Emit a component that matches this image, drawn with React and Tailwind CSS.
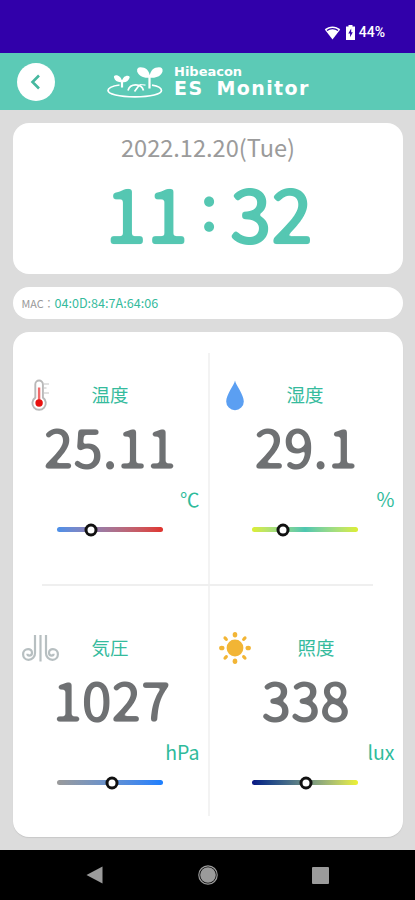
const sensors = [
  {
    id: 'temperature', label: '温度', value: '25.11', unit: '℃', Icon: Thermometer, knob: 32,
    track: 'bg-linear-to-r from-[#4a90ea] to-[#e0322c]', labelPad: 'pl-0', valuePad: 'pl-0',
  },
  {
    id: 'humidity', label: '湿度', value: '29.1', unit: '%', Icon: Drop, knob: 29,
    track: 'bg-linear-to-r from-[#dcee2c] via-[#4cc6b0] to-[#dcee2c]', labelPad: 'pl-0', valuePad: 'pl-[2px]',
  },
  {
    id: 'pressure', label: '気圧', value: '1027', unit: 'hPa', Icon: Wind, knob: 51.5,
    track: 'bg-linear-to-r from-[#9a9a9a] to-[#1b7fff]', labelPad: 'pl-0', valuePad: 'pl-[3px]',
  },
  {
    id: 'light', label: '照度', value: '338', unit: 'lux', Icon: Sun, knob: 51,
    track: 'bg-linear-to-r from-[#0c1484] to-[#eef22c]', labelPad: 'pl-[22px]', valuePad: 'pl-[1px]',
  },
];

function Thermometer() {
  return (
    <svg width="22" height="32" viewBox="0 0 22 32" fill="none">
      <path d="M6.300 18.600V5.300a3.800 3.800 0 0 1 7.600 0v13.300a6.700 6.700 0 1 1-7.600 0Z" fill="#fff" stroke="#b9b9b9" strokeWidth="1.900" />
      <path d="M10.100 8.500V23" stroke="#f06a6a" strokeWidth="2.400" />
      <circle cx="10.100" cy="24" r="3.700" fill="#e8110f" />
      <path d="M15 5H20M15 9h2.500M15 14H20" stroke="#c4c4c4" strokeWidth="1.200" />
    </svg>
  );
}

function Drop() {
  return (
    <svg width="18" height="31" viewBox="0 0 18 31">
      <path d="M9 .5C8.200 5.200 .2 14.500 .2 21.400A8.800 8.800 0 0 0 17.800 21.400C17.800 14.500 9.800 5.200 9 .5Z" fill="#5b9ff2" />
    </svg>
  );
}

function Wind() {
  return (
    <svg width="37" height="27" viewBox="0 0 37 27" fill="none" stroke="#b7bfc1" strokeWidth="2.200">
      <path d="M13 0V18a6.500 6.500 0 0 1-6.500 6.800C3 24.800 1.100 22.200 1.100 19.300c0-3 2.200-5.200 5-5.200 2.300 0 3.900 1.600 3.900 3.600 0 1.800-1.300 2.900-2.700 2.900-1.200 0-1.900-.8-1.900-1.800" />
      <path d="M18.500 0V26.500" />
      <path d="M24 0V18a6.500 6.500 0 0 0 6.500 6.800c3.500 0 5.400-2.600 5.400-5.500 0-3-2.200-5.200-5-5.200-2.300 0-3.900 1.600-3.900 3.600 0 1.800 1.300 2.900 2.700 2.900 1.200 0 1.900-.8 1.900-1.800" />
    </svg>
  );
}

function Sun() {
  return (
    <svg width="32" height="32" viewBox="-16 -16 32 32" fill="#f2b535">
      <circle r="8.400" />
      {[0, 45, 90, 135, 180, 225, 270, 315].map((a) => (
        <ellipse key={a} cx="0" cy="-13.200" rx={a % 90 ? 1.7 : 2.3} ry="2.700" transform={`rotate(${a})`} />
      ))}
    </svg>
  );
}

function Sprouts() {
  return (
    <svg width="56" height="33" viewBox="0 0 56 33" fill="none" stroke="#fff" strokeWidth="1.700">
      <path d="M12.500 18C5.500 19 1 21 1 23.500 1 27 12 29.800 28 29.800S54.500 27 54.500 23.500c0-2.700-4-4.500-9.500-5.400" />
      <path d="M38.500 18.200c-2.500-.5-4-.6-6-.7" strokeWidth="1.200" />
      <path d="M21 23.500a8 7.500 0 0 1 15.500 0M27.500 24.500l4.500-6" />
      <path d="M42.500 8V21.500M15 13V20.500" strokeWidth="2.200" />
      <g fill="#fff" stroke="none">
        <path d="M43 10.500C42.500 3 38.500 .3 33.500 .3 30.800 .3 29.700 2 30.200 4.200 31.300 9 37 11.500 43 10.500Z" />
        <path d="M42.500 10.500C43 3 47 .3 52 .3 55 .3 56 2 55.500 4.500 54 9.300 48.500 11.500 42.500 10.500Z" />
        <path d="M15.200 15C14.500 10.500 12 8.300 9 8.300 7.300 8.300 6.700 9.300 7 10.500 7.800 13.800 11 15.700 15.200 15Z" />
        <path d="M14.800 15C15.300 10.800 18 8.800 20.500 8.800 22.500 8.800 23 9.800 22.500 11 21.200 14.400 18.500 15.700 14.800 15Z" />
      </g>
    </svg>
  );
}

function Sensor({ label, value, unit, Icon, track, knob, labelPad, valuePad }) {
  return (
    <section className="flex h-[253px] flex-col">
      <div className="grid h-8 grid-cols-[55px_1fr_55px] items-center">
        <div className="flex justify-center"><Icon /></div>
        <h2 className={`h-8 text-center text-[18.500px] leading-[30px] text-[#35bb9d] ${labelPad}`}>{label}</h2>
      </div>
      <div className={`h-[74px] text-center text-[53px] leading-[68px] text-[#6f7173] [-webkit-text-stroke:1.200px_#6f7173] filter-[url(#soften)] ${valuePad}`}>
        {value}
      </div>
      <div className="h-[27px] pr-[8px] text-right text-[19.500px] leading-[28px] text-[#2fbb9b]">{unit}</div>
      <div className={`relative mx-auto mt-[15px] h-[5px] w-[106px] rounded-full ${track}`}>
        <span
          className="absolute top-1/2 size-[13px] -translate-x-1/2 -translate-y-1/2 rounded-full border-[3px] border-[#111] bg-white"
          style={{ left: `${knob}%` }}
        />
      </div>
    </section>
  );
}

export default function App() {
  return (
    <div className="flex h-[900px] w-[415px] flex-col overflow-hidden bg-[#dcdcdc] font-['Noto_Sans_CJK_JP',sans-serif]">
      <svg width="0" height="0" className="absolute">
        <filter id="soften" colorInterpolationFilters="sRGB">
          <feGaussianBlur stdDeviation="1.6" />
          <feComponentTransfer><feFuncA type="linear" slope="4" intercept="-1.4" /></feComponentTransfer>
        </filter>
      </svg>

      <div className="flex h-[52.500px] shrink-0 justify-end bg-[#3100aa] pt-[24px] pr-[30px] text-white">
        <div className="flex h-4 items-center">
          <svg width="17" height="15" viewBox="0 0 17 15">
            <path d="M8.500 14.500.8 4.600C5 .3 12 .3 16.200 4.600Z" fill="#fff" />
            <path d="M3 5.400C6 3 11 3 14 5.400" stroke="#3100aa" strokeWidth="1.300" fill="none" />
          </svg>
          <svg width="9" height="15" viewBox="0 0 9 15" className="ml-[5px]">
            <path d="M2.500 0h4v1.500H9V15H0V1.500h2.500Z" fill="#fff" />
            <path d="M5.200 3.500 2.300 8.400h1.800v3.800l2.700-5H5.200Z" fill="#3100aa" />
          </svg>
          <span className="ml-[4px] font-['Roboto',sans-serif] text-[14px] leading-4 font-medium">44%</span>
        </div>
      </div>

      <header className="flex h-[57.500px] shrink-0 items-start bg-[#5ccab6] text-white">
        <button className="mt-[10px] ml-[17px] flex size-[38px] items-center justify-center rounded-full bg-white">
          <svg width="12" height="16" viewBox="0 0 12 16" fill="none" stroke="#46b89f" strokeWidth="2.600">
            <path d="M9 1.500 2.500 8l6.500 6.500" />
          </svg>
        </button>
        <div className="mt-[14px] ml-[52px]"><Sprouts /></div>
        <h1 className="mt-[11px] ml-[11px] flex flex-col font-['DejaVu_Sans',sans-serif] font-bold">
          <span className="text-[13px] leading-[15px]">Hibeacon</span>
          <span className="text-[19px] leading-[19px] tracking-[1.400px] [word-spacing:5px]">ES Monitor</span>
        </h1>
      </header>

      <main className="flex flex-col px-[12.500px] pt-[13px]">
        <section className="flex h-[151px] flex-col rounded-[16px] bg-white">
          <div className="mt-[8px] pl-[1px] text-center text-[23.600px] leading-[33px] text-[#9b9b9b]">2022.12.20(Tue)</div>
          <div className="mt-[2px] flex h-[90px] items-center justify-center pl-[3px] text-[74.500px] leading-[90px] text-[#55c7b2] [-webkit-text-stroke:2px_#55c7b2] filter-[url(#soften)]">
            <span>11</span>
            <span className="relative -top-[8px] w-[42px] text-center text-[62px]">:</span>
            <span>32</span>
          </div>
        </section>

        <section className="mt-[13px] flex h-[32px] items-center rounded-full bg-white pl-[9px] leading-8">
          <span className="text-[10.800px] text-[#999]">MAC：</span>
          <span className="text-[12.600px] leading-[30px] text-[#35bb9d]">04:0D:84:7A:64:06</span>
        </section>

        <section className="relative mt-[13px] grid h-[505px] grid-cols-2 content-start rounded-[16px] bg-white pt-[47px] shadow-[0_1px_1px_#c8c8c8]">
          <div className="absolute top-[21px] left-[195px] h-[463px] w-[2px] bg-[#f3f3f3]" />
          <div className="absolute top-[252px] left-[29px] h-[2px] w-[331px] bg-[#efefef]" />
          {sensors.map((s) => <Sensor key={s.id} {...s} />)}
        </section>
      </main>

      <nav className="mt-auto flex h-[50px] shrink-0 items-center bg-black pl-[86px] text-[#9b9b9b]">
        <svg width="17" height="18" viewBox="0 0 17 18"><path d="M.5 9 16.500 .5v17Z" fill="currentColor" /></svg>
        <svg width="20" height="20" viewBox="0 0 20 20" className="ml-[95px]">
          <circle cx="10" cy="10" r="9.200" fill="none" stroke="currentColor" strokeWidth="1.200" />
          <circle cx="10" cy="10" r="7.800" fill="currentColor" />
        </svg>
        <span className="ml-[94px] size-[17px] rounded-[1px] bg-[#9b9b9b]" />
      </nav>
    </div>
  );
}
